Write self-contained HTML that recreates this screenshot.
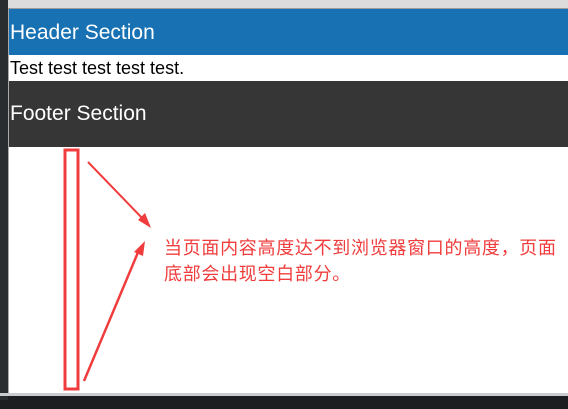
<!DOCTYPE html>
<html><head><meta charset="utf-8"><style>
html,body{margin:0;padding:0;width:568px;height:409px;overflow:hidden;background:#1c1e20;position:relative;font-family:"Liberation Sans","Noto Sans CJK SC",sans-serif}
.top{position:absolute;left:0;top:0;width:568px;height:8px;background:#dcdcdc;border-bottom:1px solid #9a9a9a}
.frame{position:absolute;left:0;top:0;width:8px;height:400px;background:#2a2d30}
.page{position:absolute;left:8px;top:9px;width:560px;height:384px;background:#fff;border-left:1px solid #aaa}
.hdr{position:absolute;left:0;top:0;width:560px;height:46px;background:#1771b3;color:#fff;font-size:21px;line-height:48px;padding-left:1px}
.txt{position:absolute;left:1px;top:47px;font-size:18px;line-height:25px;color:#000}
.ftr{position:absolute;left:0;top:72px;width:560px;height:66px;background:#363636;color:#fff;font-size:21px;line-height:66px;padding-left:1px}
.bot{position:absolute;left:0;top:393px;width:568px;height:3px;background:#c8ccd0}
.note{position:absolute;left:164px;top:234px;color:#f03c3c;font-size:18px;letter-spacing:0.7px;line-height:26px;white-space:nowrap;font-family:"Noto Sans CJK SC",sans-serif}
</style></head><body>
<div class="top"></div>
<div class="frame"></div>
<div class="page">
<div class="hdr">Header Section</div>
<div class="txt">Test test test test test.</div>
<div class="ftr">Footer Section</div>
</div>
<div class="bot"></div>
<svg style="position:absolute;left:0;top:0" width="568" height="409">
<rect x="65" y="150" width="13" height="239" fill="none" stroke="#f03c3c" stroke-width="3"/>
<line x1="88" y1="162" x2="144" y2="220" stroke="#f03c3c" stroke-width="2"/>
<polygon points="151,228 138,220 145,213" fill="#f03c3c"/>
<line x1="84" y1="381" x2="139" y2="250" stroke="#f03c3c" stroke-width="2.5"/>
<polygon points="145,241 143,256 134,252" fill="#f03c3c"/>
</svg>
<div class="note">当页面内容高度达不到浏览器窗口的高度，页面<br>底部会出现空白部分。</div>
</body></html>
